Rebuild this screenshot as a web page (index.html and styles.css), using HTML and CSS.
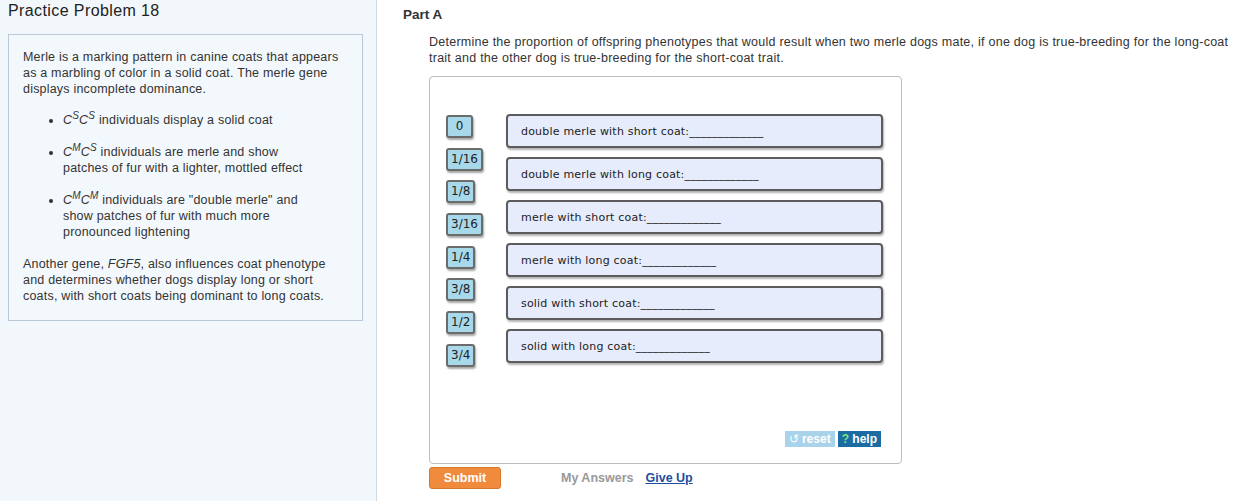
FILE: index.html
```html
<!DOCTYPE html>
<html lang="en">
<head>
    <meta charset="UTF-8">
    <title>Practice Problem 18</title>
    <link rel="stylesheet" href="styles.css">
</head>
<body>
    <div class="page">
        <div class="side">
            <h1 class="side-title">Practice Problem 18</h1>
            <div class="intro">
                <p>Merle is a marking pattern in canine coats that appears as a marbling of color in a solid coat. The merle gene displays incomplete dominance.</p>
                <ul>
                    <li><i>C<sup>S</sup>C<sup>S</sup></i> individuals display a solid coat</li>
                    <li><i>C<sup>M</sup>C<sup>S</sup></i> individuals are merle and show patches of fur with a lighter, mottled effect</li>
                    <li><i>C<sup>M</sup>C<sup>M</sup></i> individuals are "double merle" and show patches of fur with much more pronounced lightening</li>
                </ul>
                <p>Another gene, <i>FGF5</i>, also influences coat phenotype and determines whether dogs display long or short coats, with short coats being dominant to long coats.</p>
            </div>
        </div>

        <div class="main">
            <h2 class="part-title">Part A</h2>
            <div class="part">
                <p class="question">Determine the proportion of offspring phenotypes that would result when two merle dogs mate, if one dog is true-breeding for the long-coat trait and the other dog is true-breeding for the short-coat trait.</p>

                <div class="workspace">
                    <div class="board">
                        <div class="tiles">
                            <span class="tile">0</span>
                            <span class="tile">1/16</span>
                            <span class="tile">1/8</span>
                            <span class="tile">3/16</span>
                            <span class="tile">1/4</span>
                            <span class="tile">3/8</span>
                            <span class="tile">1/2</span>
                            <span class="tile">3/4</span>
                        </div>
                        <div class="targets">
                            <div class="target">double merle with short coat:_____________</div>
                            <div class="target">double merle with long coat:_____________</div>
                            <div class="target">merle with short coat:_____________</div>
                            <div class="target">merle with long coat:_____________</div>
                            <div class="target">solid with short coat:_____________</div>
                            <div class="target">solid with long coat:_____________</div>
                        </div>
                    </div>
                    <div class="tools">
                        <span class="tool reset"><span class="tool-icon">&#8634;</span> reset</span>
                        <span class="tool help"><span class="tool-icon q">?</span> help</span>
                    </div>
                </div>

                <div class="actions">
                    <button class="submit">Submit</button>
                    <span class="my-answers">My Answers</span>
                    <a class="give-up" href="#">Give Up</a>
                </div>
            </div>
        </div>
    </div>
</body>
</html>
```

FILE: styles.css
```css
body {
    margin: 0;
    font-family: 'Liberation Sans', Arial, sans-serif;
    color: #333;
    background: #fff;
}
.page {
    display: flex;
    min-height: 501px;
}
.side {
    width: 377px;
    flex-shrink: 0;
    background: #f2f7fb;
    border-right: 1px solid #cfdae5;
    padding: 0 13px 0 8px;
    box-sizing: border-box;
}
.side-title {
    margin: 2px 0 0;
    font-size: 16px;
    letter-spacing: 0.4px;
    font-weight: normal;
    line-height: 18px;
    color: #222;
}
.intro {
    margin-top: 14px;
    border: 1px solid #b9c9d9;
    background: #f3f8fc;
    padding: 0 14px 16px;
    font-size: 12.5px;
    letter-spacing: 0.2px;
    line-height: 16px;
    color: #333;
}
.intro p {
    margin: 14px 0 0;
}
.intro ul {
    margin: 15px 0 0;
    padding: 0 40px 0 40px;
}
.intro li {
    margin-bottom: 16px;
}
.intro sup {
    font-size: 10px;
    line-height: 0;
    vertical-align: 5px;
}
.main {
    flex: 1;
    padding-left: 26px;
}
.part-title {
    margin: 7px 0 0;
    font-size: 13.5px;
    line-height: 16px;
    color: #333;
}
.part {
    padding-left: 26px;
}
.question {
    margin: 11px 0 0;
    font-size: 12.5px;
    letter-spacing: 0.25px;
    line-height: 16px;
    color: #333;
    max-width: 810px;
}
.workspace {
    margin-top: 10px;
    width: 473px;
    height: 388px;
    box-sizing: border-box;
    border: 1px solid #bdbdbd;
    border-radius: 4px;
    padding: 37px 18px 0 16px;
    display: flex;
    flex-direction: column;
}
.board {
    display: flex;
    gap: 20px;
}
.tiles {
    width: 40px;
    display: flex;
    flex-direction: column;
    align-items: flex-start;
    gap: 9.7px;
    padding-top: 1px;
}
.tile {
    font-family: 'DejaVu Sans', Verdana, sans-serif;
    font-size: 12px;
    line-height: 19px;
    padding: 0 3px;
    min-width: 17px;
    text-align: center;
    color: #222;
    background: #a8d9ea;
    border: 2px solid #6b6b6b;
    border-radius: 3px;
    box-shadow: 1px 2px 2px rgba(0, 0, 0, 0.35);
}
.targets {
    flex: 1;
    display: flex;
    flex-direction: column;
    gap: 9px;
}
.target {
    height: 34px;
    box-sizing: border-box;
    display: flex;
    align-items: center;
    padding: 0 13px;
    font-family: 'DejaVu Sans', Verdana, sans-serif;
    font-size: 11px;
    letter-spacing: 0.2px;
    color: #222;
    background: #e6ecfb;
    border: 2px solid #5c5c5c;
    border-radius: 4px;
    box-shadow: 1px 2px 2px rgba(0, 0, 0, 0.3);
}
.tools {
    margin-top: auto;
    margin-bottom: 16px;
    align-self: flex-end;
    display: flex;
    gap: 3px;
    margin-right: 2px;
}
.tool {
    font-size: 12px;
    font-weight: bold;
    line-height: 16px;
    color: #fff;
    padding: 0 4px;
}
.reset {
    background: #a9d3ea;
}
.help {
    background: #1b6ca3;
}
.tool-icon {
    font-weight: normal;
}
.tool-icon.q {
    color: #7fe07f;
    font-weight: bold;
}
.actions {
    margin-top: 3px;
    display: flex;
    align-items: center;
}
.submit {
    width: 72px;
    height: 22px;
    border: 1px solid #d8772e;
    border-radius: 3px;
    background: #f08a3c;
    color: #fff;
    font-family: 'Liberation Sans', Arial, sans-serif;
    font-size: 12.5px;
    font-weight: bold;
    padding: 0;
}
.my-answers {
    margin-left: 60px;
    font-size: 12.5px;
    font-weight: bold;
    color: #999;
}
.give-up {
    margin-left: 12px;
    font-size: 12.5px;
    font-weight: bold;
    color: #1d4fa0;
}
```
